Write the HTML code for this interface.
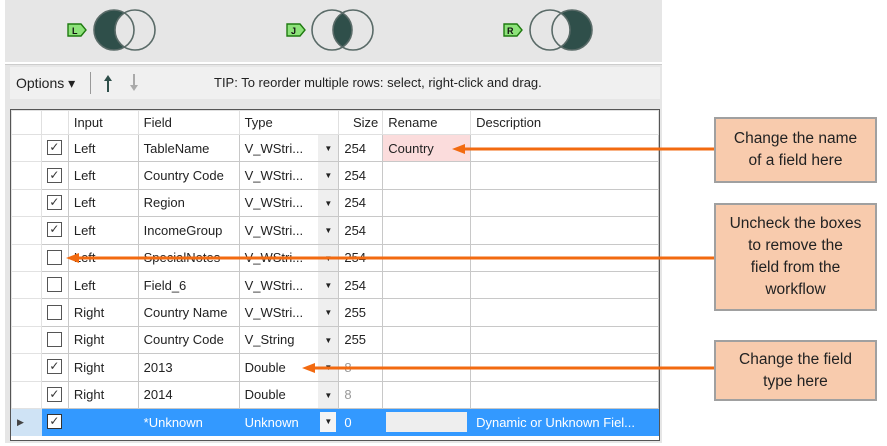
<!DOCTYPE html>
<html><head><meta charset="utf-8"><style>
body{margin:0;width:887px;height:446px;background:#fff;position:relative;overflow:hidden;font-family:"Liberation Sans",sans-serif;}
.abs{position:absolute}
#panel{left:5px;top:0;width:657px;height:443px;background:#e6e6e6;}
#tb{left:10px;top:67px;width:650px;height:32px;background:#f0f0f0;font-size:13px;color:#222;}
#grid{left:10px;top:109px;width:648px;height:330px;border:1px solid #555;background:#fff;}
table{border-collapse:collapse;table-layout:fixed;font-size:13px;color:#222;}
td{border:1px solid #c8c8c8;height:26.4px;padding:0 0 0 5px;white-space:nowrap;overflow:hidden;position:relative;}
tr.h td{height:23px;border-color:#e0e0e0;}
td.rh{background:#fff;border-color:#e2e2e2;}
.cb{display:inline-block;width:13px;height:13px;border:1px solid #555;background:#fff;vertical-align:middle;position:relative;top:-1px;font-size:12px;line-height:13px;text-align:center;color:#333;}
.dd{position:absolute;right:0;top:0;width:20px;height:100%;background:#efefef;font-size:8px;text-align:center;line-height:27px;color:#222;}
tr.sel td{background:#3399ff;color:#fff;border-color:#3399ff;}
.box{position:absolute;background:#f8cbad;border:2px solid #a0a0a0;box-sizing:border-box;font-family:"Liberation Sans",sans-serif;font-size:15.5px;color:#222;text-align:center;line-height:22px;display:flex;align-items:center;justify-content:center;}
</style></head><body>
<div id="panel" class="abs"></div>
<div class="abs" style="left:5px;top:62px;width:657px;height:2px;background:#fff"></div>
<div class="abs" style="left:5px;top:64px;width:657px;height:1px;background:#ccc"></div>
<svg class="abs" style="left:0;top:0" width="660" height="62">
<defs>
<clipPath id="c1"><circle cx="135" cy="30" r="20"/></clipPath>
<clipPath id="c2"><circle cx="332" cy="30" r="20"/></clipPath>
<clipPath id="c3"><circle cx="550" cy="30" r="20"/></clipPath>
</defs>
<g fill="#8de27a" stroke="#1f7a10" stroke-width="1.4">
<path d="M68 24h13l5 6l-5 6h-13z"/><path d="M287 24h13l5 6l-5 6h-13z"/><path d="M504 24h13l5 6l-5 6h-13z"/>
</g>
<g font-size="9" font-weight="bold" font-family="Liberation Sans" fill="#111"><text x="72" y="34">L</text><text x="291" y="34">J</text><text x="507" y="34">R</text></g>
<circle cx="114" cy="30" r="20" fill="#2f4f4a"/>
<circle cx="114" cy="30" r="20" fill="#e6e6e6" clip-path="url(#c1)"/>
<circle cx="353" cy="30" r="20" fill="#2f4f4a" clip-path="url(#c2)"/>
<circle cx="572" cy="30" r="20" fill="#2f4f4a"/>
<circle cx="572" cy="30" r="20" fill="#e6e6e6" clip-path="url(#c3)"/>
<g fill="none" stroke="#5a6b68" stroke-width="1.6">
<circle cx="114" cy="30" r="20"/><circle cx="135" cy="30" r="20"/>
<circle cx="332" cy="30" r="20"/><circle cx="353" cy="30" r="20"/>
<circle cx="550" cy="30" r="20"/><circle cx="572" cy="30" r="20"/>
</g>
</svg>
<div id="tb" class="abs">
<span class="abs" style="left:6px;top:8px;font-size:14px">Options ▾</span>
<div class="abs" style="left:80px;top:5px;width:1px;height:22px;background:#999"></div>
<svg class="abs" style="left:92px;top:6px" width="40" height="20">
<path d="M6 2l-4 6h3v11h2V8h3z" fill="#2f4f4a"/>
<path d="M32 18l-4-6h3V1h2v11h3z" fill="#aaa"/>
</svg>
<span class="abs" style="left:204px;top:8px;font-size:13px">TIP: To reorder multiple rows: select, right-click and drag.</span>
</div>
<div id="grid" class="abs">
<table>
<colgroup><col style="width:30px"><col style="width:27px"><col style="width:70px"><col style="width:101px"><col style="width:100px"><col style="width:44px"><col style="width:88px"><col style="width:188px"></colgroup>
<tr class="h"><td class="rh"></td><td></td><td>Input</td><td>Field</td><td>Type</td><td style="text-align:right;padding-right:4px">Size</td><td>Rename</td><td>Description</td></tr>
<tr><td class="rh"></td><td><span class="cb">✓</span></td><td>Left</td><td>TableName</td><td>V_WStri...<span class="dd">▼</span></td><td>254</td><td style="background:#fbdcdc">Country</td><td></td></tr>
<tr><td class="rh"></td><td><span class="cb">✓</span></td><td>Left</td><td>Country Code</td><td>V_WStri...<span class="dd">▼</span></td><td>254</td><td></td><td></td></tr>
<tr><td class="rh"></td><td><span class="cb">✓</span></td><td>Left</td><td>Region</td><td>V_WStri...<span class="dd">▼</span></td><td>254</td><td></td><td></td></tr>
<tr><td class="rh"></td><td><span class="cb">✓</span></td><td>Left</td><td>IncomeGroup</td><td>V_WStri...<span class="dd">▼</span></td><td>254</td><td></td><td></td></tr>
<tr><td class="rh"></td><td><span class="cb"></span></td><td>Left</td><td>SpecialNotes</td><td>V_WStri...<span class="dd">▼</span></td><td>254</td><td></td><td></td></tr>
<tr><td class="rh"></td><td><span class="cb"></span></td><td>Left</td><td>Field_6</td><td>V_WStri...<span class="dd">▼</span></td><td>254</td><td></td><td></td></tr>
<tr><td class="rh"></td><td><span class="cb"></span></td><td>Right</td><td>Country Name</td><td>V_WStri...<span class="dd">▼</span></td><td>255</td><td></td><td></td></tr>
<tr><td class="rh"></td><td><span class="cb"></span></td><td>Right</td><td>Country Code</td><td>V_String<span class="dd">▼</span></td><td>255</td><td></td><td></td></tr>
<tr><td class="rh"></td><td><span class="cb">✓</span></td><td>Right</td><td>2013</td><td>Double<span class="dd">▼</span></td><td style="color:#999">8</td><td></td><td></td></tr>
<tr><td class="rh"></td><td><span class="cb">✓</span></td><td>Right</td><td>2014</td><td>Double<span class="dd">▼</span></td><td style="color:#999">8</td><td></td><td></td></tr>
<tr class="sel"><td class="rh" style="background:#cfe3f5;border-color:#cfe3f5;color:#444;font-size:9px">▶</td><td><span class="cb" style="border-color:#333">✓</span></td><td></td><td>*Unknown</td><td>Unknown<span class="dd" style="background:#f4f4f4;color:#222;top:3px;height:20px;line-height:20px;right:2px;width:16px">▼</span></td><td>0</td><td><div style="position:absolute;left:3px;top:3px;right:3px;bottom:3px;background:#eee"></div></td><td>Dynamic or Unknown Fiel...</td></tr>
</table>
</div>
<svg class="abs" style="left:0;top:0" width="887" height="446">
<g stroke="#f26a10" stroke-width="3" fill="#f26a10">
<line x1="714" y1="149" x2="462" y2="149"/><path d="M452 149l13-5v10z" stroke="none"/>
<line x1="714" y1="258" x2="76" y2="258"/><path d="M66 258l13-5v10z" stroke="none"/>
<line x1="714" y1="368" x2="312" y2="368"/><path d="M302 368l13-5v10z" stroke="none"/>
</g>
</svg>
<div class="box" style="left:714px;top:117px;width:163px;height:66px">Change the name<br>of a field here</div>
<div class="box" style="left:714px;top:203px;width:163px;height:108px">Uncheck the boxes<br>to remove the<br>field from the<br>workflow</div>
<div class="box" style="left:714px;top:340px;width:163px;height:61px">Change the field<br>type here</div>
</body></html>
